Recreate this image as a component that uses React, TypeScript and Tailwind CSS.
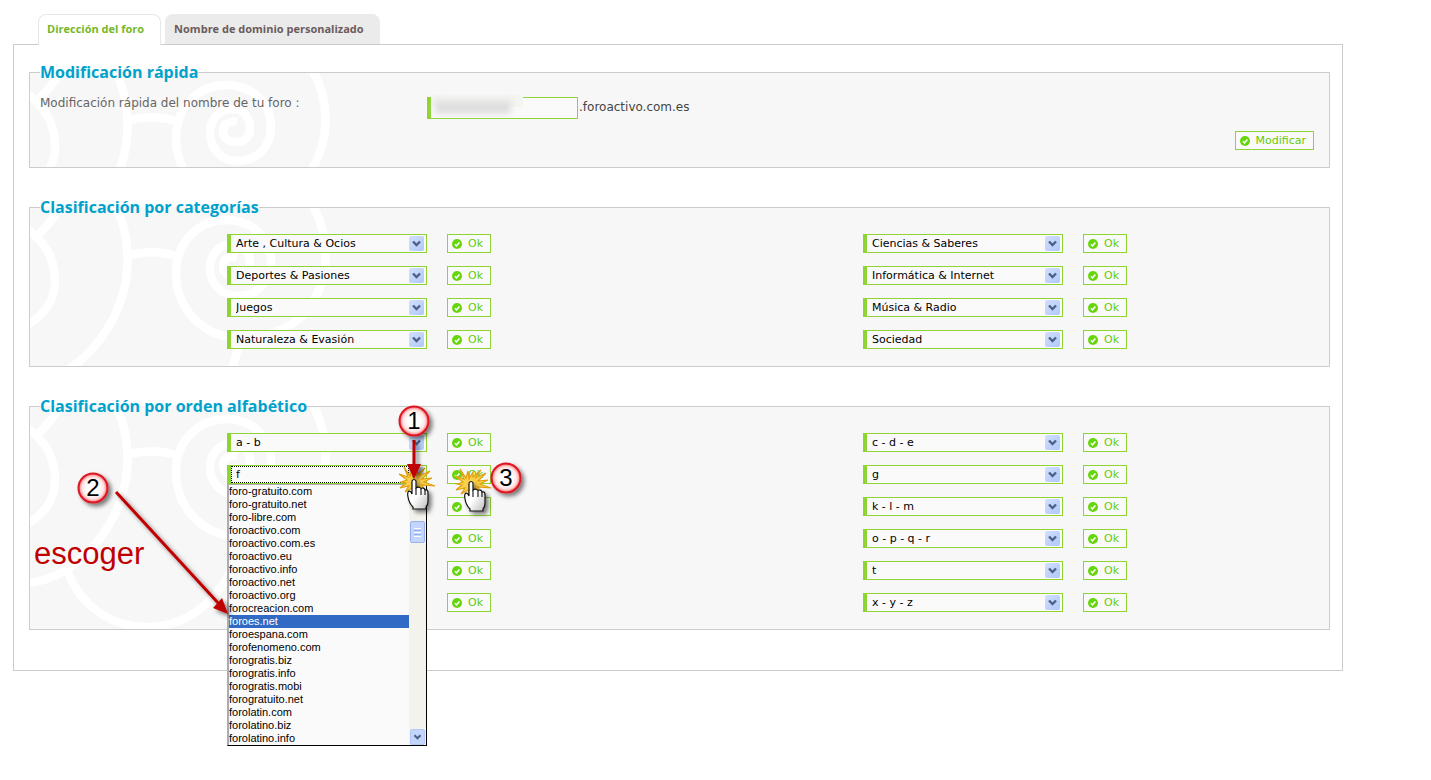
import type { ReactNode } from "react";

type Item = { label: string; open?: boolean };

const categories: Item[] = [
  { label: "Arte , Cultura & Ocios" },
  { label: "Ciencias & Saberes" },
  { label: "Deportes & Pasiones" },
  { label: "Informática & Internet" },
  { label: "Juegos" },
  { label: "Música & Radio" },
  { label: "Naturaleza & Evasión" },
  { label: "Sociedad" },
];

const letters: Item[] = [
  { label: "a - b" },
  { label: "c - d - e" },
  { label: "f", open: true },
  { label: "g" },
  { label: "h - i - j" },
  { label: "k - l - m" },
  { label: "n" },
  { label: "o - p - q - r" },
  { label: "s" },
  { label: "t" },
  { label: "u - v - w" },
  { label: "x - y - z" },
];

const domains = [
  "foro-gratuito.com",
  "foro-gratuito.net",
  "foro-libre.com",
  "foroactivo.com",
  "foroactivo.com.es",
  "foroactivo.eu",
  "foroactivo.info",
  "foroactivo.net",
  "foroactivo.org",
  "forocreacion.com",
  "foroes.net",
  "foroespana.com",
  "forofenomeno.com",
  "forogratis.biz",
  "forogratis.info",
  "forogratis.mobi",
  "forogratuito.net",
  "forolatin.com",
  "forolatino.biz",
  "forolatino.info",
];

const Chevron = () => (
  <svg viewBox="0 0 15 15" className="block size-full" aria-hidden="true">
    <path d="M4 5.5 7.5 9 11 5.5" fill="none" stroke="#4d6185" strokeWidth="2.4" />
  </svg>
);

const Spirals = () => (
  <svg className="h-full w-full" fill="none" stroke="#fff" strokeWidth="8.5" aria-hidden="true">
    <path d="M-4 20C16 34 25 52 25 73C25 92 16 106 -4 118" />
    <path d="M5 29C16 20 25 10 31 -4" />
    <path d="M84 -6C102 30 102 72 85 107C69 140 38 172 -2 176" />
    <path d="M99 47Q124 41 146 48" />
    <path d="M282 -4C300 28 300 66 282 96C268 118 240 130 210 130C172 129 146 100 146 65C146 34 168 12 197 12C222 12 241 30 241 54C241 74 226 88 208 88C191 88 180 75 180 60C180 46 190 36 203 36C214 36 220 45 220 55C220 64 215 69 207 69C199 69 193 65 193 58C193 52 199 47 207 49" />
    <path d="M38 166C52 200 82 220 117 220C164 220 204 182 209 130" />
  </svg>
);

const Group = ({ title, children }: { title: string; children: ReactNode }) => (
  <fieldset className="relative mb-[29px] min-w-0 border border-[#ccc] bg-[#f7f7f7] pr-[15px] pb-[17px] pl-[10px]">
    <legend className="relative z-10 h-5 font-['Open_Sans',sans-serif] text-base leading-5 font-bold text-[#00a2cc]">
      {title}
    </legend>
    {/* the legend pushes the padding box down, so start the drawing at the border line */}
    <div className="absolute inset-x-0 -top-[9px] bottom-0 overflow-hidden">
      <Spirals />
    </div>
    <div className="relative">{children}</div>
  </fieldset>
);

const OkButton = ({ children }: { children: ReactNode }) => (
  <button
    type="button"
    className="flex h-[19px] shrink-0 items-center gap-[6px] border border-[#8fd435] bg-[#fafafa] pr-[7px] pl-1 text-[11px] text-[#66cc00]"
  >
    <svg viewBox="0 0 10 10" className="size-[10px]" aria-hidden="true">
      <circle cx="5" cy="5" r="5" fill="#66d60c" />
      <path d="M2.8 5.2 4.5 6.8 7.4 3.4" fill="none" stroke="#fff" strokeWidth="1.5" />
    </svg>
    <span className="pt-[2px]">{children}</span>
  </button>
);

const DomainList = () => (
  <div className="absolute top-[19px] left-0 z-20 flex w-full border border-t-[#acacac] border-r-black border-b-black border-l-[#acacac] bg-[#fafafa]">
    <ul role="listbox" aria-label="Dominios" className="flex-1 border-l border-[#acacac] font-['Liberation_Sans',Tahoma,sans-serif] text-[11px] leading-[13px] text-black">
      {domains.map((d) => (
        <li
          key={d}
          role="option"
          aria-selected={d === "foroes.net"}
          className="aria-selected:bg-[#316ac5] aria-selected:text-white"
        >
          {d}
        </li>
      ))}
    </ul>
    <div className="flex w-[17px] flex-col justify-between bg-[#f3f2ec] px-px">
      <div className="mt-9 flex h-[22px] flex-col items-center justify-center gap-px rounded-xs border border-[#98b3ea] bg-[#c3d5fd]">
        <i className="h-px w-[7px] bg-white" />
        <i className="h-px w-[7px] bg-[#8cb0f8]" />
        <i className="h-px w-[7px] bg-white" />
        <i className="h-px w-[7px] bg-[#8cb0f8]" />
        <i className="h-px w-[7px] bg-white" />
      </div>
      <div className="h-4 rounded-xs border border-[#b4c8f6] bg-[#c3d5fd]">
        <Chevron />
      </div>
    </div>
  </div>
);

const SelectRow = ({ item }: { item: Item }) => (
  <div className="flex justify-center gap-5">
    <div className="relative w-[200px]">
      <select
        aria-label={item.label}
        className="block h-[19px] w-full appearance-none border border-l-4 border-[#8fd435] bg-[#fafafa] pt-[2px] pl-[5px] text-[11px] text-black"
      >
        <option>{item.label}</option>
      </select>
      <span className="pointer-events-none absolute top-[2px] right-[3px] size-[15px] rounded-xs bg-linear-to-br from-[#d3e0fd] to-[#afc7fa]">
        <Chevron />
      </span>
      {item.open && (
        <>
          <span className="pointer-events-none absolute top-px right-[18px] bottom-px left-1 border border-dotted border-black" />
          <DomainList />
        </>
      )}
    </div>
    <OkButton>Ok</OkButton>
  </div>
);

const SelectGrid = ({ items }: { items: Item[] }) => (
  <div className="grid grid-cols-2 gap-y-[13px] px-px pt-[17px]">
    {items.map((item) => (
      <SelectRow key={item.label} item={item} />
    ))}
  </div>
);

const Badge = ({ x, y, n }: { x: number; y: number; n: number }) => (
  <g>
    <circle cx={x} cy={y} r="14.5" fill="url(#ball)" stroke="#dc1420" strokeWidth="2" filter="url(#shadow)" />
    <text x={x} y={y + 8} textAnchor="middle" fontSize="24" className="fill-black font-['Liberation_Sans',Arial,sans-serif]">
      {n}
    </text>
  </g>
);

const Burst = ({ x, y }: { x: number; y: number }) => (
  <path
    transform={`translate(${x} ${y})`}
    d="M-1-3-2-11-4-4-10-13-6-3-15-6-7 0-13 2-8 3-14 8-5 6-9 12-2 8 1 15 4 7 11 12 8 5 21 6 10 2 18-2 8-1 16-9 5-4 11-12 3-5 3-10Z"
    fill="#fbd04a"
    stroke="#e0a010"
    strokeWidth="1.2"
  />
);

const Hand = ({ x, y }: { x: number; y: number }) => (
  <g transform={`translate(${x} ${y})`}>
    <path
      d="M-2 1Q0-2 2 1V8Q5 6 7 8.500Q10 7 11 10Q14 9 14 13V21Q14 25 12 27V29H-1V27Q-5 23-6 17Q-7 12-5 11Q-3 11-2 14Z"
      fill="url(#hand)"
      stroke="#111"
      strokeWidth="1.2"
      filter="url(#shadow)"
    />
    <path d="M2 8V15M7 9V15M11 10V15" stroke="#111" strokeWidth="1.1" />
  </g>
);

const Annotations = () => (
  <svg className="pointer-events-none absolute top-0 left-0 z-30 h-[780px] w-[640px]">
    <defs>
      <radialGradient id="ball">
        <stop offset="0.45" stopColor="#fff" />
        <stop offset="0.75" stopColor="#ffe4e4" />
        <stop offset="1" stopColor="#fa6a6a" />
      </radialGradient>
      <linearGradient id="hand" x2="1" y2="1">
        <stop offset="0.5" stopColor="#fff" />
        <stop offset="1" stopColor="#bbb" />
      </linearGradient>
      <filter id="shadow" x="-30%" y="-30%" width="180%" height="180%">
        <feDropShadow dx="3" dy="3" stdDeviation="2" floodColor="#000" floodOpacity="0.5" />
      </filter>
    </defs>
    <g filter="url(#shadow)">
      <path d="M116 492 220 605" stroke="#c00000" strokeWidth="3" />
      <path d="M228 614 213 608 222 598Z" fill="#c00000" />
    </g>
    <Burst x={414} y={480} />
    <Burst x={470} y={482} />
    <path d="M412.500 440H415.500V464H421L414 479 407 464H412.500Z" fill="#c00000" filter="url(#shadow)" />
    <Hand x={414} y={480} />
    <Hand x={471} y={482} />
    <Badge x={414} y={421} n={1} />
    <Badge x={93} y={488} n={2} />
    <Badge x={506} y={478} n={3} />
    <text x="34" y="564" fontSize="31" className="fill-[#c00000] font-['Liberation_Sans',Arial,sans-serif]">
      escoger
    </text>
  </svg>
);

export default function App() {
  return (
    <div className="relative min-h-screen bg-white pt-[14px] pr-[88px] pb-8 pl-[13px] font-['DejaVu_Sans',Verdana,sans-serif] text-xs text-[#555]">
      <nav className="relative z-10 -mb-px flex items-start gap-1 pl-[25px] font-['Open_Sans',sans-serif] text-[11px] font-bold">
        <a href="#direccion" className="h-[31px] rounded-t-lg border border-b-0 border-[#e8e8e8] bg-white pr-4 pl-2 leading-7 text-[#76b72a]">
          Dirección del foro
        </a>
        <a href="#dominio" className="h-[30px] rounded-t-lg bg-[#ebebeb] pr-4 pl-[9px] leading-[30px] text-[#6b5b5b]">
          Nombre de dominio personalizado
        </a>
      </nav>
      <main className="border border-[#ccc] bg-white pt-[17px] pr-3 pb-[11px] pl-[15px]">
        <Group title="Modificación rápida">
          <div className="flex items-start pt-[15px]">
            <label htmlFor="forum" className="w-[387px] text-[12px] leading-3 text-[#666]">
              Modificación rápida del nombre de tu foro :
            </label>
            <div className="relative">
              <input id="forum" className="block h-[22px] w-[151px] border border-l-4 border-[#8fd435] bg-[#fafafa] px-1 text-black" />
              <span className="absolute -top-[2px] left-1 h-3 w-[92px] bg-[#f3f5f0]" />
              <span className="absolute top-[4px] left-2 h-[13px] w-[76px] bg-[#dedede] blur-[3px]" />
            </div>
            <span className="pl-px text-[12px] leading-5 text-[#444]">.foroactivo.com.es</span>
          </div>
          <div className="flex justify-end pt-3">
            <OkButton>Modificar</OkButton>
          </div>
        </Group>
        <Group title="Clasificación por categorías">
          <SelectGrid items={categories} />
        </Group>
        <Group title="Clasificación por orden alfabético">
          <SelectGrid items={letters} />
        </Group>
      </main>
      <Annotations />
    </div>
  );
}
